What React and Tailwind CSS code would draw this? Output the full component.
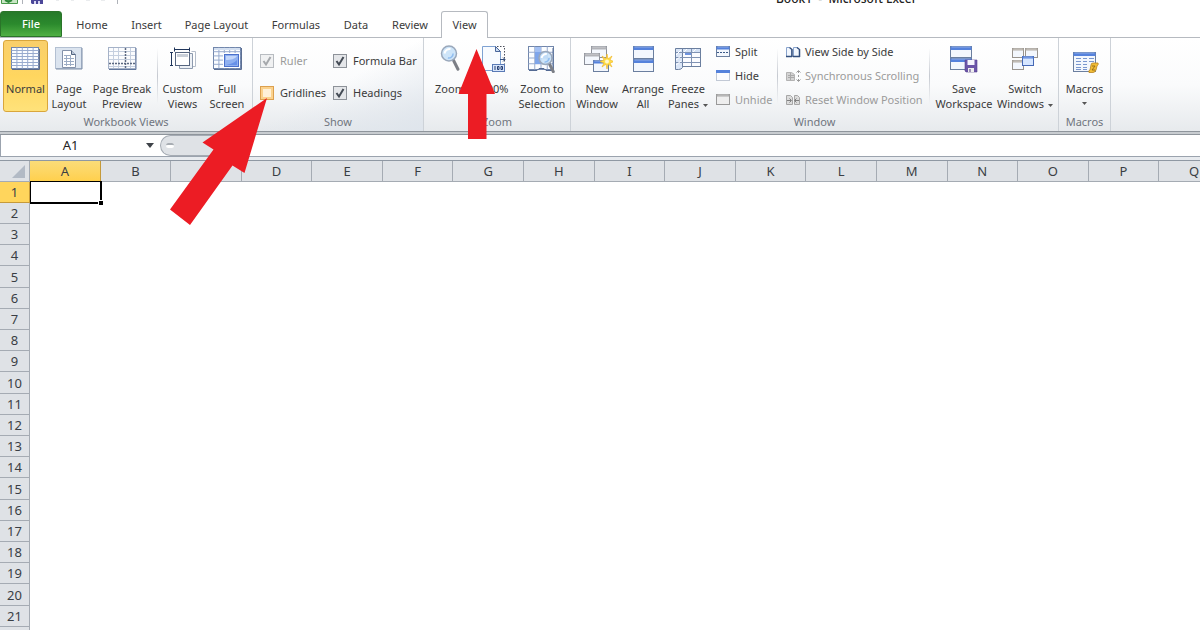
import React from 'react';

const BLUE = '#5582dc';

function Grid({ x = 0, y = 0, w = 28, h = 22, cols = 5, rows = 6 }) {
  const lines = [];
  for (let i = 1; i < cols; i++) lines.push(`M${x + (w * i) / cols} ${y}v${h}`);
  for (let i = 1; i < rows; i++) lines.push(`M${x} ${y + (h * i) / rows}h${w}`);
  return (
    <g>
      <rect x={x} y={y} width={w} height={h} fill="#fbfdff" stroke="#7186ab" />
      <path d={lines.join('')} stroke="#98abce" fill="none" />
    </g>
  );
}

function Win({ x, y, w, h, color = BLUE, fill = '#f3f7fd', border = '#6b7f9f', bar = 3 }) {
  return (
    <g>
      <rect x={x} y={y} width={w} height={h} fill={fill} stroke={border} />
      <rect x={x} y={y} width={w} height={bar} fill={color} />
      <path d={`M${x + 1} ${y + 0.5}h${w - 2}`} stroke="#fff" strokeOpacity=".35" />
    </g>
  );
}

const Lens = ({ x, y, r }) => (
  <g>
    <path d={`M${x + r * 0.6} ${y + r * 0.9}L${x + r * 1.2} ${y + r * 2.1}`} stroke="#7c7f86" strokeWidth="3" strokeLinecap="round" />
    <circle cx={x} cy={y} r={r} fill="#c6e0f8" fillOpacity=".85" stroke="#9aa8bb" strokeWidth="1.500" />
    <path d={`M${x - r * 0.6} ${y}a${r * 0.7} ${r * 0.7} 0 0 1 ${r * 0.8} ${-r * 0.6}`} stroke="#fff" strokeWidth="2" fill="none" />
    <path d={`M${x + r * 0.55} ${y}a${r * 0.6} ${r * 0.6} 0 0 1 ${-r * 0.7} ${r * 0.6}`} stroke="#8fbdf0" strokeWidth="1.500" fill="none" />
  </g>
);

const Icon = ({ children }) => (
  <svg width="32" height="30" viewBox="0 0 32 30" className="shrink-0" aria-hidden="true">{children}</svg>
);

const icons = {
  normal: <Icon><path d="M2 26.500h27.500V6" stroke="#5c6b88" fill="none" /><Grid x={1.500} y={4.500} w={27} h={21} cols={5} rows={7} /></Icon>,
  page: (
    <Icon>
      <rect x="2.500" y="4.500" width="26" height="21" fill="#dbe4ef" stroke="#b3c0d2" />
      <path d="M3 26h26V5" stroke="#7d8ea8" fill="none" />
      <path d="M9.500 7.500h9l4 4v13h-13z" fill="#fff" stroke="#8492aa" />
      <path d="M18.500 7.500v4h4" fill="#b9c5d6" stroke="#526480" />
      <path d="M11 12.500h7M11 15.500h10M11 18.500h10M11 21.500h10M13.500 12v11M17.500 12v11" stroke="#9cacc4" />
    </Icon>
  ),
  pageBreak: (
    <Icon>
      <rect x="2.500" y="4.500" width="27" height="21" fill="#fbfcfe" stroke="#a5b2c8" />
      <path d="M7.500 5v20M12.500 5v20M24.500 5v20M3 8.500h26M3 12.500h26M3 16.500h26M3 23.500h26" stroke="#c5cfdf" />
      <path d="M19.500 5v20M3 20.500h26" stroke="#5b6881" strokeWidth="1.500" strokeDasharray="2 1" />
      <path d="M3 26.500h27V5" stroke="#62779c" fill="none" />
    </Icon>
  ),
  custom: (
    <Icon>
      <path d="M24.500 8.500h4v15h-4" fill="#fff" stroke="#b5bdca" />
      <path d="M12.500 10.500h13v15h-13z" fill="#edf1f6" stroke="#8d9aae" />
      <rect x="8.500" y="9.500" width="14" height="13" fill="#fff" stroke="#56657f" />
      <rect x="10" y="11" width="11" height="3" fill="#c9cfd8" />
      <path d="M7 6.500h16M7.500 4.500v4M22.500 4.500v4M4.500 9v14M3 9.500h3M3 22.500h3" stroke="#1f355b" fill="none" />
    </Icon>
  ),
  full: (
    <Icon>
      <Grid x={2.500} y={4.500} w={27} h={21} cols={5} rows={5} />
      <path d="M3 6h26" stroke="#d3dff0" strokeWidth="2" />
      <rect x="12" y="10" width="17" height="15" fill="#fff" />
      <rect x="13.500" y="11.500" width="14" height="12" fill="#8fb0f0" stroke="#4b70cb" />
      <path d="M15 17v-4h11c-2 3-6 4-11 4" fill="#c3d6fa" />
      <path d="M15 22h11v-5c-3 3-6 4-11 5" fill="#6790e8" />
      <path d="M3 26.500h27.500V5" stroke="#5c6f93" fill="none" />
    </Icon>
  ),
  zoom: <Icon><Lens x={15} y={10.500} r={7.500} /></Icon>,
  hundred: (
    <Icon>
      <path d="M3.500 3.500h13l5 5v19h-18z" fill="#f8fbff" stroke="#7fa2d2" />
      <path d="M16.500 3.500v5h5z" fill="#cbdcf1" stroke="#4a669b" />
      <path d="M18 3.500h7.500v17" stroke="#4b4f5b" strokeDasharray="1.500 1.500" fill="none" />
      <path d="M21 16.500h5m-2-2l2 2l-2 2" stroke="#36507f" fill="none" />
      <rect x="13.500" y="21.500" width="12" height="7" fill="#d8e6fb" stroke="#5a7ab5" />
      <path d="M16 23v4M18.500 23.500h1.500v3h-1.500zM22 23.500h1.500v3h-1.500z" stroke="#243c70" fill="none" />
    </Icon>
  ),
  zoomSel: (
    <Icon>
      <Grid x={2.500} y={3.500} w={25} h={23} cols={4} rows={4} />
      <path d="M9 9h12v6H9zM9 4h6v5H9z" fill="#a3c0f3" />
      <rect x="9" y="9" width="6" height="12" fill="#7ea5ea" />
      <path d="M3 27.500h8l2-2h5l2 2h7V5" stroke="#536a93" fill="none" />
      <Lens x={19.500} y={15} r={6.500} />
    </Icon>
  ),
  newWin: (
    <Icon>
      <Win x={10.500} y={3.500} w={15} h={11} color="#b2b3b8" border="#8b8f99" />
      <Win x={3.500} y={10.500} w={15} h={11} color="#b2b3b8" border="#8b8f99" />
      <Win x={12.500} y={17.500} w={15} h={11} />
      <path d="M26 11l1 5 4-3-2 4 4 1.500-4 1.500 2 4-4-3-1 5-1-5-4 3 2-4-4-1.500 4-1.500-2-4 4 3z" fill="#ffe04a" stroke="#f0b92c" strokeWidth=".7" />
      <circle cx="26" cy="18.500" r="2" fill="#fff8d0" />
    </Icon>
  ),
  arrange: <Icon><Win x={6.500} y={3.500} w={20} h={12} bar={3.5} /><Win x={6.500} y={16.500} w={20} h={12} bar={3.5} /></Icon>,
  freeze: (
    <Icon>
      <rect x="4.500" y="5.500" width="24" height="18" fill="#fbfcff" stroke="#6b7f9f" />
      <path d="M5 6h23v3H5z" fill="#d5e2f5" />
      <path d="M13 9h7v3h-7z" fill="#6e93df" />
      <path d="M3.500 5.500h7v19q-1 2-4 2h-3z" fill="#dbe6f7" stroke="#6b7f9f" />
      <path d="M4 9.500h24M4 14.500h24M4 19.500h24M19.500 6v17" stroke="#8093b4" />
      <path d="M4 22l5-4M4 17l5-4M4 12l5-5M12 9l3-3M21 9l3-3" stroke="#fff" />
    </Icon>
  ),
  save: (
    <Icon>
      <Win x={2.500} y={3.500} w={21} h={11} bar={3.500} />
      <Win x={2.500} y={15.500} w={21} h={11} bar={3.500} />
      <path d="M17 17h12v12H18l-1-1z" fill="#6c55a8" stroke="#56418f" strokeWidth=".6" />
      <rect x="19.500" y="17" width="7" height="5" fill="#f6f5fd" />
      <path d="M20 25h6v4h-6z" fill="#eee" /><path d="M22 26v3" stroke="#4b327f" />
    </Icon>
  ),
  switchWin: (
    <Icon>
      <Win x={3.500} y={5.500} w={11} h={9} bar={2} color="#b3ada6" border="#99948e" />
      <Win x={16.500} y={5.500} w={12} h={9} bar={2} color="#b3ada6" border="#99948e" />
      <Win x={3.500} y={17.500} w={11} h={9} bar={2} color="#b3ada6" border="#99948e" />
      <Win x={13.500} y={13.500} w={11} h={9} bar={2} fill="#d6e6ff" border="#4568b5" />
    </Icon>
  ),
  macros: (
    <Icon>
      <Win x={4.500} y={9.500} w={22} h={19} bar={3.500} />
      <path d="M7 15.500h5M14 15.500h4M20 15.500h5M7 18.500h5M14 18.500h4M20 18.500h5M7 21.500h5M14 21.500h4M7 24.500h5M14 24.500h4M7 26.500h5M14 26.500h4" stroke="#7997cf" />
      <path d="M22 22q0-2 2-2h5q1 1-1 3l-1 4q-1 2.500-3 2.500h-4q-1-2 1-2.500z" fill="#f1bd37" stroke="#b98422" strokeWidth=".8" />
      <path d="M23 23h3l-3 4h3" stroke="#8a5f10" strokeWidth=".8" fill="none" />
    </Icon>
  ),
};

const Small = ({ children }) => (
  <svg width="15" height="14" viewBox="0 0 15 14" className="shrink-0" aria-hidden="true">{children}</svg>
);

const smallIcons = {
  split: <Small><Win x={0.5} y={1.500} w={13} h={10} bar={3} /><path d="M1 7.500h12" stroke="#3c5a88" strokeDasharray="2 1" /></Small>,
  hide: <Small><rect x=".5" y="2.500" width="13" height="9" fill="#fbfcff" stroke="#8897ad" strokeDasharray="1 1" /><rect y="1" width="14" height="3" fill={BLUE} /></Small>,
  unhide: <Small><Win x={0.5} y={1.500} w={13} h={10} bar={2} color="#a8a8a8" border="#999" fill="#eee" /></Small>,
  side: (
    <Small>
      <path d="M.5 2.500h3l2 2v7h-5zM7.500 2.500h4l2 2v7h-6z" fill="#f2f7fe" stroke="#88a3cd" />
      <path d="M3.500 2.500l2.500 2v7.500M11 2.500l2.500 2v7.500M0 11.500h6M7 11.500h7" stroke="#34507e" fill="none" strokeWidth="1.500" />
    </Small>
  ),
  sync: (
    <Small>
      <path d="M.5 3.500h5l3 2v6h-8z" fill="#d4d4d4" stroke="#b3b3b3" />
      <path d="M2 6.500h6M2 8.500h6M4.500 4v7" stroke="#aaa" />
      <path d="M12.500 2v2M12.500 6v2M12.500 10v2M10.500 3.500l2-2 2 2M10.500 10.500l2 2 2-2" stroke="#999" fill="none" />
    </Small>
  ),
  reset: (
    <Small>
      <path d="M.5 2.500h4l2 2v7h-6zM8.500 2.500h3l2 2v7h-5z" fill="#dcdcdc" stroke="#a7a7a7" />
      <path d="M1 7.500h4M9 7.500h4M3.500 5.500l2 2-2 2M10.500 5.500l-2 2 2 2" stroke="#808080" fill="none" />
    </Small>
  ),
};

const Caret = () => (
  <svg width="5" height="3" viewBox="0 0 5 3" className="inline-block align-middle" aria-hidden="true"><path d="M0 0h5L2.500 3z" fill="#555" /></svg>
);

function Big({ icon, lines, width, active, caret }) {
  return (
    <button
      type="button"
      className={`flex h-[72px] shrink-0 flex-col items-center whitespace-nowrap leading-[15px] ${width} ${
        active ? 'rounded-[3px] border border-[#d9a63c] bg-linear-to-b from-[#f9cf6b] via-[#ffd65f] to-[#ffe27a]' : 'border border-transparent'
      }`}
    >
      <span className="flex h-10 items-start pt-[2px]">{icons[icon]}</span>
      <span>{lines[0]}</span>
      {lines[1] && <span>{lines[1]}{caret && <span className="ml-1 inline-flex align-middle"><Caret /></span>}</span>}
      {!lines[1] && caret && <span className="flex h-[15px] items-center"><Caret /></span>}
    </button>
  );
}

function SmallButton({ icon, label, disabled }) {
  return (
    <button type="button" disabled={disabled} className="flex h-6 items-center gap-1 whitespace-nowrap text-[#3b3b3b] disabled:text-[#9b9b9b]">
      {smallIcons[icon]}
      {label}
    </button>
  );
}

function Group({ label, width, children, tint = '' }) {
  return (
    <section className={`flex shrink-0 flex-col border-r border-[#cdd2d8] ${width} ${tint}`}>
      <div className="flex grow items-start pt-[2px]">{children}</div>
      <h2 className="pb-px text-center leading-[16px] text-[#70757e]">{label}</h2>
    </section>
  );
}

const Sep = () => <div className="mt-2 h-14 w-px shrink-0 bg-linear-to-b from-transparent via-[#c5c9d0] to-transparent" />;

function Check({ id, label, checked, disabled, hot }) {
  return (
    <div className="flex h-8 items-center gap-[6px] whitespace-nowrap">
      <span className="relative flex size-[14px] shrink-0">
        <input
          id={id}
          type="checkbox"
          defaultChecked={checked}
          disabled={disabled}
          className={`peer size-[14px] appearance-none border ${
            hot ? 'border-[#dca04f] bg-[#fff1d8] shadow-[inset_0_0_0_2px_#fbd28d]' : 'border-[#8d9299] bg-[#e4e6e9] disabled:border-[#b8bcc1] disabled:bg-[#f0f1f2]'
          }`}
        />
        <svg viewBox="0 0 14 14" className="pointer-events-none absolute inset-0 hidden text-[#444b55] peer-checked:block peer-disabled:text-[#a5a8ac]" aria-hidden="true">
          <path d="M3.500 7l2.500 3.500L10.500 3" stroke="currentColor" strokeWidth="2" fill="none" />
        </svg>
      </span>
      <label htmlFor={id} className={disabled ? 'text-[#9b9b9b]' : ''}>{label}</label>
    </div>
  );
}

const tabs = [
  ['Home', 'w-[60px]'],
  ['Insert', 'w-[49px]'],
  ['Page Layout', 'w-[91px]'],
  ['Formulas', 'w-[68px]'],
  ['Data', 'w-[52px]'],
  ['Review', 'w-[56px]'],
];

const columns = 'ABCDEFGHIJKLMNOPQ'.split('');
const rows = Array.from({ length: 22 }, (_, i) => i + 1);

export default function App() {
  return (
    <div className="relative flex h-screen flex-col overflow-hidden bg-white font-['Noto_Sans',sans-serif] text-[11px] text-[#3b3b3b]">
      <header className="flex h-[11px] shrink-0 items-start overflow-hidden">
        <svg width="120" height="6" viewBox="0 0 120 6" className="shrink-0" aria-hidden="true">
          <path d="M1.500-2v5.500h16V-2" fill="#c9e6c5" stroke="#4a9a4b" />
          <path d="M5 0l4 2M12 0L8 2" stroke="#2c8737" strokeWidth="2" />
          <path d="M22.500 0v4M117.500 0v4" stroke="#aeb2b8" />
          <path d="M31 0h12v4H32l-1-1z" fill="#4b4799" /><path d="M34 1h6v3h-6z" fill="#d9d8f2" /><path d="M36 1h2v3h-2z" fill="#4b4799" />
          <path d="M56 0h3M71 0h3M86 0h4M101 0h4" stroke="#d6d9dd" />
        </svg>
        <h1 className="-mt-2 ml-[656px] whitespace-pre text-xs leading-[14px] font-medium text-[#222]">Book1  -  Microsoft Excel</h1>
      </header>

      <nav className="flex h-[27px] shrink-0 items-stretch border-b border-[#b6bac0]">
        <button type="button" className="w-[62px] rounded-t-[3px] border border-[#2a7429] bg-linear-to-b from-[#26792a] via-[#2b8a2d] to-[#4fb044] pt-px font-medium text-white">File</button>
        {tabs.map(([name, width]) => (
          <button key={name} type="button" className={`whitespace-nowrap pt-[2px] ${width}`}>{name}</button>
        ))}
        <button type="button" className="-mb-px ml-[3px] w-[47px] rounded-t-[3px] border border-b-0 border-[#b6bac0] bg-white">View</button>
      </nav>

      <div className="flex h-[93px] shrink-0 bg-linear-to-b from-white via-[#fafbfc] to-[#e7eaed]">
        <Group label="Workbook Views" width="w-[253px]">
          <div className="flex pl-[3px]">
            <Big icon="normal" lines={['Normal']} width="w-[45px]" active />
            <Big icon="page" lines={['Page', 'Layout']} width="w-[42px]" />
            <Big icon="pageBreak" lines={['Page Break', 'Preview']} width="w-[64px]" />
            <div className="w-[3px]" />
            <Sep />
            <div className="w-[2px]" />
            <Big icon="custom" lines={['Custom', 'Views']} width="w-[45px]" />
            <Big icon="full" lines={['Full', 'Screen']} width="w-[44px]" />
          </div>
        </Group>
        <Group label="Show" width="w-[171px]" tint="bg-linear-to-br from-transparent via-transparent to-[#dfe5ec]">
          <div className="grid grid-cols-[73px_auto] pt-[5px] pl-[7px]">
            <Check id="ruler" label="Ruler" checked disabled />
            <Check id="formula-bar" label="Formula Bar" checked />
            <Check id="gridlines" label="Gridlines" hot />
            <Check id="headings" label="Headings" checked />
          </div>
        </Group>
        <Group label="Zoom" width="w-[147px]">
          <div className="flex pl-[4px]">
            <Big icon="zoom" lines={['Zoom']} width="w-[44px]" />
            <Big icon="hundred" lines={['100%']} width="w-[45px]" />
            <Big icon="zoomSel" lines={['Zoom to', 'Selection']} width="w-[50px]" />
          </div>
        </Group>
        <Group label="Window" width="w-[488px]">
          <div className="flex pl-[3px]">
            <Big icon="newWin" lines={['New', 'Window']} width="w-[46px]" />
            <Big icon="arrange" lines={['Arrange', 'All']} width="w-[46px]" />
            <Big icon="freeze" lines={['Freeze', 'Panes']} width="w-[44px]" caret />
            <div className="ml-[6px] flex w-[61px] flex-col">
              <SmallButton icon="split" label="Split" />
              <SmallButton icon="hide" label="Hide" />
              <SmallButton icon="unhide" label="Unhide" disabled />
            </div>
            <Sep />
            <div className="ml-[8px] flex w-[143px] flex-col">
              <SmallButton icon="side" label="View Side by Side" />
              <SmallButton icon="sync" label="Synchronous Scrolling" disabled />
              <SmallButton icon="reset" label="Reset Window Position" disabled />
            </div>
            <Sep />
            <div className="w-[4px]" />
            <Big icon="save" lines={['Save', 'Workspace']} width="w-[60px]" />
            <Big icon="switchWin" lines={['Switch', 'Windows']} width="w-[62px]" caret />
          </div>
        </Group>
        <Group label="Macros" width="w-[52px]">
          <Big icon="macros" lines={['Macros']} width="w-[51px]" caret />
        </Group>
      </div>

      <div className="h-1 shrink-0 border-y border-[#8f959c] bg-[#c8ccd0]" />
      <div className="flex h-[22px] shrink-0 border-b border-[#9ba3ae] bg-white">
        <label className="flex w-[140px] items-center border-l border-[#9ba3ae]">
          <input aria-label="Name Box" defaultValue="A1" className="w-full bg-transparent text-center text-[13px] text-[#222] outline-none" />
        </label>
        <button type="button" aria-label="Name list" className="flex w-5 items-center justify-center">
          <svg width="8" height="5" viewBox="0 0 8 5" aria-hidden="true"><path d="M0 0h8L4 5z" fill="#3f4349" /></svg>
        </button>
        <div className="flex w-[80px] items-center rounded-l-full border-y border-l border-[#a5abb3] bg-[#dfe2e6] pl-[5px]">
          <span className="h-[5px] w-2 rounded-full border-t-2 border-[#a8adb3] bg-white" />
        </div>
        <input aria-label="Formula" className="min-w-0 grow bg-white outline-none" />
      </div>
      <div className="h-[4px] shrink-0 border-b border-[#8f98a3] bg-[#e8ebef]" />

      <main className="grow overflow-hidden">
        <table className="w-[1230px] table-fixed border-separate border-spacing-0 text-[13px] text-[#3a3e44]">
          <colgroup>
            <col className="w-[30px]" />
            {columns.map((c) => <col key={c} />)}
          </colgroup>
          <thead>
            <tr className="h-[21px]">
              <th className="border-r border-b border-[#a5abb3] bg-[#dfe2e6] p-0" aria-label="Select all">
                <svg width="13" height="13" viewBox="0 0 13 13" className="ml-3" aria-hidden="true"><path d="M13 0v13H0z" fill="#b2bac5" /></svg>
              </th>
              {columns.map((c) => (
                <th
                  key={c}
                  scope="col"
                  className={`border-r border-b p-0 leading-[20px] font-normal ${
                    c === 'A' ? 'border-[#c59a3a] bg-linear-to-b from-[#fbdc78] to-[#ffd04c]' : 'border-[#a5abb3] bg-[#dfe2e6]'
                  }`}
                >
                  {c}
                </th>
              ))}
            </tr>
          </thead>
          <tbody>
            {rows.map((n) => (
              <tr key={n} className={n % 5 === 0 ? 'h-[22px]' : 'h-[21px]'}>
                <th
                  scope="row"
                  className={`border-r border-b p-0 leading-[20px] font-normal ${
                    n === 1 ? 'border-[#c59a3a] bg-[#ffd55c]' : 'border-[#a5abb3] bg-[#dfe2e6]'
                  }`}
                >
                  {n}
                </th>
                {columns.map((c) =>
                  n === 1 && c === 'A' ? (
                    <td key={c} className="relative p-0">
                      <div className="absolute -top-px -right-px -bottom-px left-0 border-t border-r-2 border-b-2 border-l border-black">
                        <span className="absolute -right-[3px] -bottom-[3px] size-[5px] border-t border-l border-white bg-black" />
                      </div>
                    </td>
                  ) : (
                    <td key={c} className="p-0" />
                  )
                )}
              </tr>
            ))}
          </tbody>
        </table>
      </main>

      <svg width="520" height="240" viewBox="0 0 520 240" className="pointer-events-none absolute top-0 left-0" aria-hidden="true">
        <path d="M267 98L244.500 173L232.500 165.500L190 225L170 209.500L213.500 149.500L202.500 142.500Z" fill="#ec1c24" />
        <path d="M476.500 49L495 94H486.500V139H468V94H458.500Z" fill="#ec1c24" />
      </svg>
    </div>
  );
}
